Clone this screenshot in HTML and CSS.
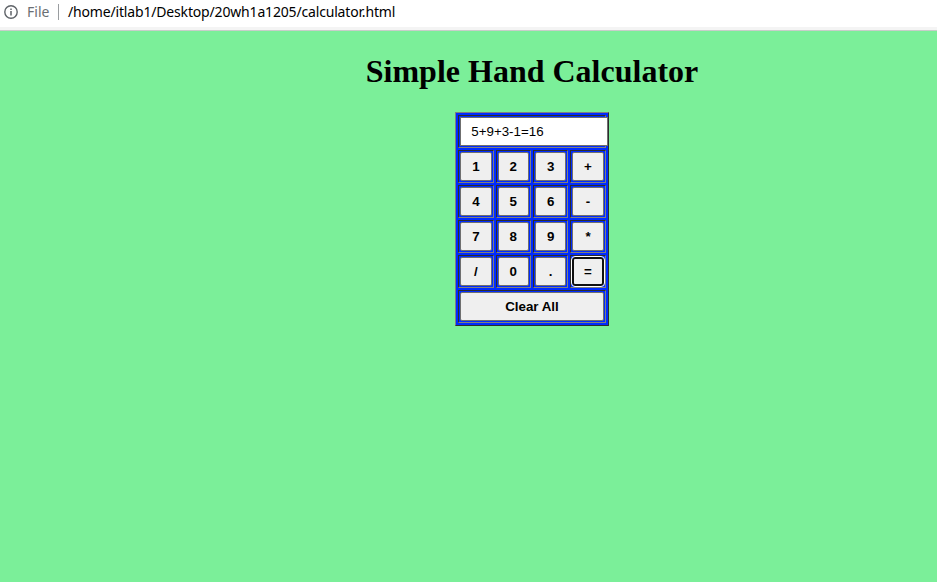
FILE: index.html
```html
<!DOCTYPE html>
<html lang="en">
<head>
<meta charset="utf-8">
<title>Calculator</title>
<link rel="stylesheet" href="styles.css">
</head>
<body>
<header class="bar">
  <svg class="info" viewBox="0 0 14 14" width="14" height="14"><circle cx="7" cy="7" r="6.2" fill="none" stroke="#5f6368" stroke-width="1.4"/><path d="M7 6.1V10.5M7 3.4V4.9" stroke="#5f6368" stroke-width="1.5"/></svg>
  <span class="scheme">File</span>
  <span class="divider"></span>
  <span class="path">/home/itlab1/Desktop/20wh1a1205/calculator.html</span>
</header>
<main class="page">
  <h1>Simple Hand Calculator</h1>
  <table class="calc">
    <tr><td colspan="4"><div class="display-cell"><input class="display" type="text" value="5+9+3-1=16"></div></td></tr>
    <tr><td><button>1</button></td><td><button>2</button></td><td><button>3</button></td><td><button>+</button></td></tr>
    <tr><td><button>4</button></td><td><button>5</button></td><td><button>6</button></td><td><button>-</button></td></tr>
    <tr><td><button>7</button></td><td><button>8</button></td><td><button>9</button></td><td><button>*</button></td></tr>
    <tr><td><button>/</button></td><td><button>0</button></td><td><button>.</button></td><td><button class="focused">=</button></td></tr>
    <tr><td colspan="4"><button>Clear All</button></td></tr>
  </table>
</main>
</body>
</html>
```
FILE: styles.css
```css
* { box-sizing: border-box; }
html, body { margin: 0; height: 100%; }
body { display: flex; flex-direction: column; background: #fff; }
.bar {
  display: flex;
  align-items: center;
  flex: none;
  height: 31px;
  padding: 0 0 7px 4px;
  background: linear-gradient(#fff 27px, #f4f4f4 27px, #f4f4f4 30px, #c9cdca 30px);
  font: 14px/20px "Noto Sans", sans-serif;
  color: #000;
}
.info { flex: none; }
.scheme { width: 31px; margin-left: 9px; color: #6b6f74; }
.divider { width: 1px; height: 16px; margin-right: 9px; background: #9a9da0; }
.path { letter-spacing: -0.17px; white-space: nowrap; }
.page {
  flex: 1;
  padding: 22px 0 0 127px;
  background: #7bef99;
}
h1 {
  margin: 0 0 22px;
  text-align: center;
  font: bold 32px/37px "Liberation Serif", serif;
  color: #000;
}
.calc {
  width: 153.4px;
  margin: 0 auto;
  border: 1px outset gray;
  border-spacing: 2px;
  background: #002bff;
  table-layout: fixed;
}
td { height: 33px; padding: 1px; border: 1px inset gray; line-height: 0; }
button, .display {
  display: block;
  height: 29px;
  padding: 6px 0;
  border: 1px solid #6f6f6f;
  font: 13.333px/15px "Liberation Sans", sans-serif;
  color: #000;
}
button {
  width: 100%;
  border-radius: 2px;
  background: #efefef;
  font-weight: bold;
  text-align: center;
}
.display-cell { height: 29px; }
.display {
  width: 148px;
  padding: 6px 10px;
  border-radius: 0;
  background: #fff;
}
.focused {
  padding: 5px 0;
  border: 2px solid #101010;
  border-radius: 3px;
  outline: 1px solid #fff;
}
```
